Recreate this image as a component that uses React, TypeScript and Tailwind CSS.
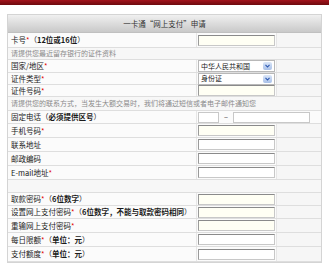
import React from 'react';

const font = { fontFamily: '"Noto Sans CJK SC", "Noto Sans", sans-serif' };

const Star = () => <span className="text-[#e00000]">*</span>;

const Input = ({ cream = false }: { cream?: boolean }) => (
  <div
    className={`h-[11px] w-[77px] border border-[#c8c8c8] border-t-[#8a8a8a] border-l-[#9a9a9a] ${
      cream ? 'bg-[#fffff4]' : 'bg-white'
    }`}
  />
);

const Select = ({ value }: { value: string }) => (
  <div className="h-[12px] w-[77px] border border-[#b8b8b8] bg-white flex items-center justify-between pl-[2px] pr-[2px] overflow-hidden">
    <span className="text-[7px] leading-none text-[#222] whitespace-nowrap">{value}</span>
    <span className="w-[9px] h-[8px] rounded-[2px] bg-gradient-to-b from-[#dbe6f7] to-[#a8c0e8] flex items-center justify-center">
      <svg width="5" height="4" viewBox="0 0 5 4">
        <path d="M0.5 0.8 L2.5 3 L4.5 0.8" stroke="#2a56b0" strokeWidth="1.1" fill="none" />
      </svg>
    </span>
  </div>
);

type RowProps = { label?: React.ReactNode; field?: React.ReactNode; h?: string };

const Row = ({ label, field, h = 'h-[14px]' }: RowProps) => (
  <div className={`flex ${h} border-b border-[#dedede]`}>
    <div className="w-[189px] flex items-center pl-[3px] text-[7.5px] leading-none text-[#1a1a1a] bg-[#fbfbfb] border-r border-[#e6e6e6] whitespace-nowrap overflow-hidden">
      {label}
    </div>
    <div className="w-[80px] flex items-center pl-[1px] border-r border-[#e6e6e6] bg-[#fbfbfb]">{field}</div>
    <div className="flex-1 bg-[#f6f6f6]" />
  </div>
);

const Hint = ({ text, h = 'h-[13px]' }: { text: string; h?: string }) => (
  <div className={`${h} flex items-center pl-[3px] border-b border-[#dedede] bg-[#f7f7f7] text-[7px] leading-none text-[#8a8a8a] whitespace-nowrap`}>
    {text}
  </div>
);

export default function App() {
  return (
    <div className="w-[329px] h-[268px] bg-white overflow-hidden" style={font}>
      <div className="h-[5px] bg-gradient-to-b from-[#a3141c] to-[#6e0a0e]" />
      <div className="ml-[7px] mt-[9px] w-[315px] border border-[#d4d4d4]">
        <div className="h-[18px] flex items-center justify-center bg-gradient-to-b from-[#f0f0f0] to-[#c9c9c9] border-b border-[#c0c0c0] text-[7.5px] text-[#333]">
          一卡通“网上支付”申请
        </div>
        <Row
          h="h-[15px]"
          label={<>卡号<Star />（<b>12位或16位</b>）</>}
          field={<Input cream />}
        />
        <Hint text="请提供您最近留存银行的证件资料" h="h-[12px]" />
        <Row h="h-[13px]" label={<>国家/地区<Star /></>} field={<Select value="中华人民共和国" />} />
        <Row h="h-[12px]" label={<>证件类型<Star /></>} field={<Select value="身份证" />} />
        <Row h="h-[12px]" label={<>证件号码<Star /></>} field={<Input cream />} />
        <Hint text="请提供您的联系方式，当发生大额交易时，我们将通过短信或者电子邮件通知您" h="h-[14px]" />
        <div className="flex h-[13px] border-b border-[#dedede]">
          <div className="w-[189px] flex items-center pl-[3px] text-[7.5px] leading-none text-[#1a1a1a] bg-[#fbfbfb] border-r border-[#e6e6e6] whitespace-nowrap">
            固定电话（<b>必须提供区号</b>）
          </div>
          <div className="flex-1 flex items-center pl-[1px] bg-[#fbfbfb] gap-[5px]">
            <div className="h-[11px] w-[21px] border border-[#c8c8c8] bg-white" />
            <span className="text-[7.5px] leading-none text-[#333]">–</span>
            <div className="h-[11px] w-[77px] border border-[#c8c8c8] bg-white" />
          </div>
        </div>
        <Row label={<>手机号码<Star /></>} field={<Input cream />} />
        <Row label="联系地址" field={<Input />} />
        <Row label="邮政编码" field={<Input />} />
        <Row label={<>E-mail地址<Star /></>} field={<Input />} />
        <div className="h-[13px] border-b border-[#dedede] bg-[#f7f7f7]" />
        <Row h="h-[13px]" label={<>取款密码<Star />（<b>6位数字</b>）</>} field={<Input cream />} />
        <Row
          h="h-[13px]"
          label={<>设置网上支付密码<Star />（<b>6位数字，不能与取款密码相同</b>）</>}
          field={<Input cream />}
        />
        <Row label={<>重输网上支付密码<Star /></>} field={<Input cream />} />
        <Row label={<>每日限额<Star />（<b>单位：元</b>）</>} field={<Input />} />
        <Row h="h-[15px]" label={<>支付额度<Star />（<b>单位：元</b>）</>} field={<Input />} />
      </div>
    </div>
  );
}
